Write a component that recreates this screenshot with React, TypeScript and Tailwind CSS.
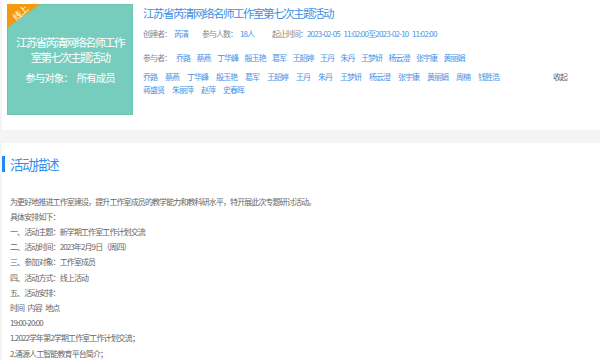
const names1 = ["乔路", "蔡燕", "丁华峰", "殷玉艳", "葛军", "王韶婷", "王丹", "朱丹", "王梦妍", "杨云澄", "张宇康", "黄丽娟"];
const names2 = [...names1, "周楠", "钱胜浩", "蒋盛贤", "朱丽萍", "赵萍", "史春晖"];

const lines = [
  "为更好地推进工作室建设，提升工作室成员的教学能力和教科研水平，特开展此次专题研讨活动。",
  "具体安排如下：",
  "一、活动主题：新学期工作室工作计划交流",
  "二、活动时间：2023年2月9日（周四）",
  "三、参加对象：工作室成员",
  "四、活动方式：线上活动",
  "五、活动安排：",
  "时间 内容 地点",
  "19:00-20:00",
  "1.2022学年第2学期工作室工作计划交流；",
  "2.涌源人工智能教育平台简介；",
];

export default function App() {
  return (
    <main className="w-[600px] h-[360px] overflow-hidden bg-[#f4f4f4] font-['Noto_Sans_CJK_SC',sans-serif]">
      {/* Activity header card */}
      <section className="ml-[2px] h-[130px] bg-white flex pl-[5px] pt-[4px]">
        <div className="relative w-[126px] h-[111px] shrink-0 bg-[#76cdbd] border border-[#6cc4b2] flex flex-col items-center justify-center text-white">
          <svg className="absolute -left-px -top-px" width="33" height="24" viewBox="0 0 33 24">
            <polygon points="0,0 33,0 0,24" fill="#f39a0e" />
          </svg>
          <span className="absolute left-[4px] top-[2px] -rotate-[42deg] text-[9px] leading-[12px] tracking-[-0.5px]">线上</span>
          <p className="text-center text-[11.5px] leading-[15px] tracking-[-1.7px]">
            江苏省芮清网络名师工作
            <br />
            室第七次主题活动
          </p>
          <p className="mt-[5px] text-[10.5px] leading-[15px] tracking-[-1px]">
            参与对象：<span className="ml-[4px]">所有成员</span>
          </p>
        </div>

        <div className="ml-[10px] flex-1 flex flex-col">
          <h1 className="mt-px text-[11.5px] leading-[16px] tracking-[-1.5px] text-[#3c8fe2]">江苏省芮清网络名师工作室第七次主题活动</h1>
          <div className="mt-[5.5px] flex text-[8px] leading-[13px] tracking-[-1px] text-[#888]">
            <span className="mr-[14px]">
              创建者：<span className="text-[#4a93e6] ml-[3px]">芮清</span>
            </span>
            <span className="mr-[18px]">
              参与人数：<span className="text-[#4a93e6] ml-[3px]">18人</span>
            </span>
            <span>
              起止时间：<span className="text-[#4a93e6] tracking-[-0.8px] [word-spacing:2.5px]">2023-02-05 11:02:00至2023-02-10 11:02:00</span>
            </span>
          </div>
          <div className="mt-[11px] flex text-[8px] leading-[13px] tracking-[-1px]">
            <span className="text-[#888] mr-[5px]">参与者：</span>
            <div className="flex gap-x-[6.5px] text-[#4a93e6]">
              {names1.map((n) => (
                <span key={n}>{n}</span>
              ))}
            </div>
          </div>
          <div className="mt-[6px] flex text-[8px] leading-[13px] tracking-[-1px]">
            <div className="w-[362px] flex flex-wrap gap-x-[8px] text-[#4a93e6]">
              {names2.map((n) => (
                <span key={n}>{n}</span>
              ))}
            </div>
            <span className="ml-auto mr-[33px] text-[#666]">收起</span>
          </div>
        </div>
      </section>

      {/* Description card */}
      <section className="mt-[13px] ml-[2px] h-[217px] bg-white pt-[11px]">
        <div className="flex items-center h-[20px]">
          <span className="w-[3px] h-[16px] bg-[#1f8af0]" />
          <h2 className="ml-[5px] text-[13.5px] leading-[20px] tracking-[-1.5px] text-[#2f90f0]">活动描述</h2>
        </div>
        <div className="mt-[19.5px] pl-[8px] text-[8px] leading-[15.2px] tracking-[-0.9px] [word-spacing:2.5px] text-[#666]">
          {lines.map((l) => (
            <p key={l}>{l}</p>
          ))}
        </div>
      </section>
    </main>
  );
}
